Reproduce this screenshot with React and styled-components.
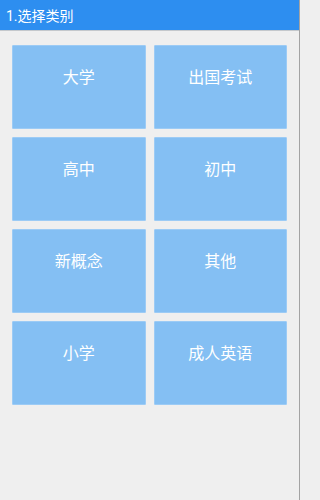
import React from "react";
import styled, { createGlobalStyle } from "styled-components";

const GlobalStyle = createGlobalStyle`
  html, body {
    margin: 0;
    padding: 0;
    background: #efefef;
  }
  body {
    font-family: Roboto, "Noto Sans CJK SC", sans-serif;
  }
`;

const Page = styled.div`
  width: 300px;
  height: 500px;
  box-sizing: border-box;
  background: #efefef;
  border-right: 1px solid #a3a3a3;
  display: flex;
  flex-direction: column;
`;

const TitleBar = styled.div`
  height: 30px;
  background: #2d8ef0;
  border-bottom: 1px solid #c4c8cc;
  display: flex;
  align-items: center;
  padding-left: 6px;
  color: #ffffff;
  font-size: 14px;
`;

const Grid = styled.div`
  display: grid;
  grid-template-columns: 1fr 1fr;
  grid-auto-rows: 84px;
  gap: 8px;
  padding: 14px 12px 0 12px;
`;

const Tile = styled.div`
  box-sizing: border-box;
  background: #84bff3;
  border: 1px solid #9ccbf5;
  border-radius: 1px;
  color: #ffffff;
  font-size: 16px;
  line-height: 20px;
  text-align: center;
  padding-top: 22px;
  cursor: pointer;
`;

const categories = ["大学", "出国考试", "高中", "初中", "新概念", "其他", "小学", "成人英语"];

export default function App() {
  return (
    <Page>
      <GlobalStyle />
      <TitleBar>1.选择类别</TitleBar>
      <Grid>
        {categories.map((c) => (
          <Tile key={c}>{c}</Tile>
        ))}
      </Grid>
    </Page>
  );
}
